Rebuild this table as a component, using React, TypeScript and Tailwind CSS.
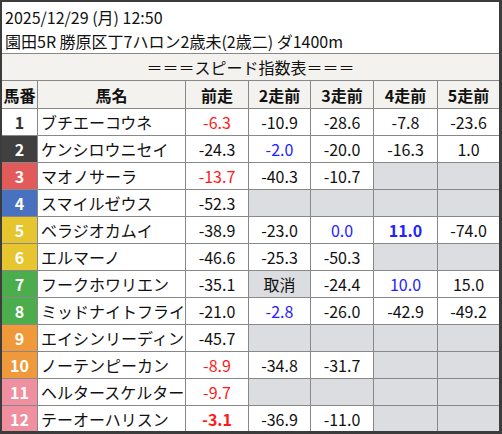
import React from "react";

type Cell = { v?: string; c?: "r" | "b" | "rb" | "bb"; gray?: boolean };

const rows: { n: number; name: string; bg: string; fg: string; cells: Cell[] }[] = [
  { n: 1, name: "ブチエーコウネ", bg: "bg-white", fg: "text-[#333]", cells: [{ v: "-6.3", c: "r" }, { v: "-10.9" }, { v: "-28.6" }, { v: "-7.8" }, { v: "-23.6" }] },
  { n: 2, name: "ケンシロウニセイ", bg: "bg-[#404040]", fg: "text-white", cells: [{ v: "-24.3" }, { v: "-2.0", c: "b" }, { v: "-20.0" }, { v: "-16.3" }, { v: "1.0" }] },
  { n: 3, name: "マオノサーラ", bg: "bg-[#e35a5a]", fg: "text-white", cells: [{ v: "-13.7", c: "r" }, { v: "-40.3" }, { v: "-10.7" }, { gray: true }, { gray: true }] },
  { n: 4, name: "スマイルゼウス", bg: "bg-[#4871c0]", fg: "text-white", cells: [{ v: "-52.3" }, { gray: true }, { gray: true }, { gray: true }, { gray: true }] },
  { n: 5, name: "ベラジオカムイ", bg: "bg-[#e6c52e]", fg: "text-white", cells: [{ v: "-38.9" }, { v: "-23.0" }, { v: "0.0", c: "b" }, { v: "11.0", c: "bb" }, { v: "-74.0" }] },
  { n: 6, name: "エルマーノ", bg: "bg-[#e6c52e]", fg: "text-white", cells: [{ v: "-46.6" }, { v: "-25.3" }, { v: "-50.3" }, { gray: true }, { gray: true }] },
  { n: 7, name: "フークホワリエン", bg: "bg-[#4cad4c]", fg: "text-white", cells: [{ v: "-35.1" }, { v: "取消", gray: true }, { v: "-24.4" }, { v: "10.0", c: "b" }, { v: "15.0" }] },
  { n: 8, name: "ミッドナイトフライ", bg: "bg-[#4cad4c]", fg: "text-white", cells: [{ v: "-21.0" }, { v: "-2.8", c: "b" }, { v: "-26.0" }, { v: "-42.9" }, { v: "-49.2" }] },
  { n: 9, name: "エイシンリーディン", bg: "bg-[#f0993a]", fg: "text-white", cells: [{ v: "-45.7" }, { gray: true }, { gray: true }, { gray: true }, { gray: true }] },
  { n: 10, name: "ノーテンピーカン", bg: "bg-[#f0993a]", fg: "text-white", cells: [{ v: "-8.9", c: "r" }, { v: "-34.8" }, { v: "-31.7" }, { gray: true }, { gray: true }] },
  { n: 11, name: "ヘルタースケルター", bg: "bg-[#f08fa0]", fg: "text-white", cells: [{ v: "-9.7", c: "r" }, { gray: true }, { gray: true }, { gray: true }, { gray: true }] },
  { n: 12, name: "テーオーハリスン", bg: "bg-[#f08fa0]", fg: "text-white", cells: [{ v: "-3.1", c: "rb" }, { v: "-36.9" }, { v: "-11.0" }, { gray: true }, { gray: true }] },
];

const colorClass = (c?: string) => {
  switch (c) {
    case "r":
      return "text-[#ff1a1a]";
    case "rb":
      return "text-[#ff1a1a] font-bold";
    case "b":
      return "text-[#2222ff]";
    case "bb":
      return "text-[#2222ff] font-bold";
    default:
      return "text-[#111]";
  }
};

const grid = "grid grid-cols-[36px_148px_63px_62px_63px_64px_61px]";

export default function App() {
  return (
    <div
      className="w-[502px] h-[434px] overflow-hidden bg-white border-[#3c3c3c] border-t-2 border-l-2 border-r-[3px] border-b-[3px] text-[16px] text-[#111]"
      style={{ fontFamily: '"Noto Sans CJK JP", "Noto Sans", sans-serif' }}
    >
      <div className="h-[52px] border-b border-[#888] pl-[3px] pt-[3px] leading-[24px]">
        <div>2025/12/29 (月) 12:50</div>
        <div>園田5R 勝原区丁7ハロン2歳未(2歳二) ダ1400m</div>
      </div>
      <div className="h-[27px] border-b border-[#888] bg-[#f3f2ee] flex items-center justify-center">
        ＝＝＝スピード指数表＝＝＝
      </div>
      <div className={`${grid} h-[28px] border-b border-[#888] bg-[#f3f2ee] font-bold`}>
        {["馬番", "馬名", "前走", "2走前", "3走前", "4走前", "5走前"].map((h, i) => (
          <div
            key={h}
            className={`flex items-center justify-center whitespace-nowrap ${i < 6 ? "border-r border-[#888]" : ""}`}
          >
            {h}
          </div>
        ))}
      </div>
      {rows.map((r) => (
        <div
          key={r.n}
          className={`${grid} ${r.n === 12 ? "h-[26px]" : "h-[27px]"} border-b border-[#888]`}
        >
          <div className={`${r.bg} ${r.fg} font-bold flex items-center justify-center border-r border-[#888]`}>{r.n}</div>
          <div className="flex items-center pl-[3px] whitespace-nowrap overflow-hidden border-r border-[#888]">{r.name}</div>
          {r.cells.map((c, i) => (
            <div
              key={i}
              className={`flex items-center justify-center ${c.gray ? "bg-[#dcdde1]" : ""} ${colorClass(c.c)} ${i < 4 ? "border-r border-[#888]" : ""}`}
            >
              {c.v ?? ""}
            </div>
          ))}
        </div>
      ))}
    </div>
  );
}
